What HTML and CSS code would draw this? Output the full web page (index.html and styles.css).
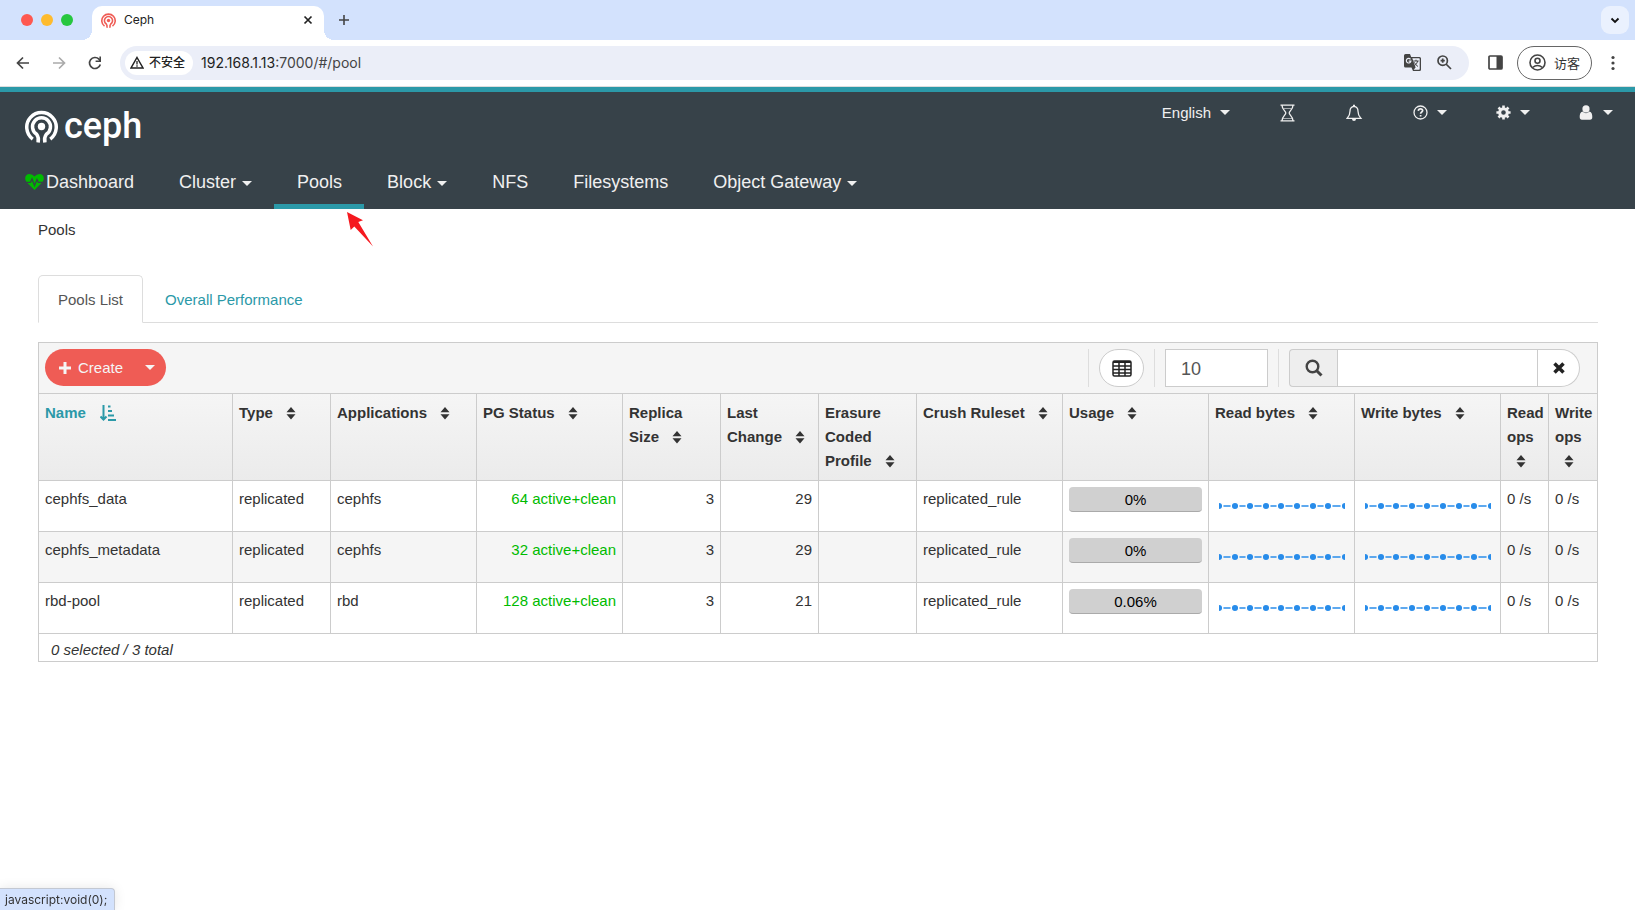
FILE: index.html
```html
<!DOCTYPE html>
<html lang="en">
<head>
    <meta charset="utf-8">
    <title>Ceph</title>
    <link rel="stylesheet" href="styles.css">
</head>
<body>
    <!-- shared icons -->
    <svg class="sprite" aria-hidden="true">
        <symbol id="ceph-mark" viewBox="0 0 32 32">
            <g fill="none" stroke="currentColor" stroke-width="3.400">
                <path d="M7.500 28.200A14.300 14.300 0 1 1 24.500 28.200"/>
                <path d="M12.700 31.500C13.400 28 13.200 26 11.300 23.500A8.700 8.700 0 1 1 20.700 23.500C18.800 26 18.600 28 19.300 31.500"/>
            </g>
            <circle cx="16" cy="16" r="3.600" fill="currentColor"/>
        </symbol>
        <symbol id="sort" viewBox="0 0 10 14">
            <path d="M5 1L9.500 6.300H.5zM5 13.500L.5 8.200h9z" fill="currentColor"/>
        </symbol>
        <symbol id="sparkline" viewBox="0 0 126 8">
            <path d="M0 4h126" stroke="#288cea" stroke-width="1.500"/>
            <g fill="#288cea" stroke="currentColor" stroke-width="1.500">
                <circle cx="0" cy="4" r="3.800"/><circle cx="16" cy="4" r="3.800"/><circle cx="31" cy="4" r="3.800"/>
                <circle cx="47" cy="4" r="3.800"/><circle cx="62" cy="4" r="3.800"/><circle cx="78" cy="4" r="3.800"/>
                <circle cx="94" cy="4" r="3.800"/><circle cx="109" cy="4" r="3.800"/><circle cx="126" cy="4" r="3.800"/>
            </g>
        </symbol>
    </svg>

    <div class="tab-strip">
        <div class="lights"><i class="red"></i><i class="yellow"></i><i class="green"></i></div>
        <div class="browser-tab">
            <svg class="favicon" width="15" height="15"><use href="#ceph-mark"/></svg>
            <span>Ceph</span>
            <button class="plain" aria-label="Close tab">
                <svg width="10" height="10" viewBox="0 0 10 10"><path d="M1.500 1.500l7 7m0-7l-7 7" stroke="#222" stroke-width="1.700"/></svg>
            </button>
        </div>
        <button class="plain new-tab" aria-label="New tab">
            <svg width="12" height="12" viewBox="0 0 12 12"><path d="M6 1v10M1 6h10" stroke="#444" stroke-width="1.600"/></svg>
        </button>
        <button class="tab-search" aria-label="Search tabs">
            <svg width="10" height="7" viewBox="0 0 10 7"><path d="M1.500 1.500L5 5l3.500-3.500" fill="none" stroke="#111" stroke-width="1.800"/></svg>
        </button>
    </div>

    <div class="toolbar">
        <button class="plain nav-btn" aria-label="Back">
            <svg width="14" height="14" viewBox="0 0 14 14"><path d="M13 7H2M7 1.500L1.500 7 7 12.500" fill="none" stroke="#444" stroke-width="1.700"/></svg>
        </button>
        <button class="plain nav-btn" aria-label="Forward">
            <svg width="14" height="14" viewBox="0 0 14 14"><path d="M1 7h11M7 1.500L12.500 7 7 12.500" fill="none" stroke="#aaa" stroke-width="1.700"/></svg>
        </button>
        <button class="plain nav-btn" aria-label="Reload">
            <svg width="14" height="14" viewBox="0 0 14 14"><path d="M12.300 8.500A5.500 5.500 0 1 1 11 3.200L12.500 5" fill="none" stroke="#444" stroke-width="1.700"/><path d="M13 .5v5.500H7.600V4.400h3.800V.5z" fill="#444"/></svg>
        </button>
        <div class="omnibox">
            <span class="chip">
                <svg width="14" height="13" viewBox="0 0 14 13"><path d="M7 1.500L13 12H1z" fill="none" stroke="#222" stroke-width="1.500"/><path d="M7 5v3.500M7 9.300v1.400" stroke="#222" stroke-width="1.300"/></svg>
                不安全
            </span>
            <span class="url">192.168.1.13<span>:7000/#/pool</span></span>
            <svg class="translate" width="17" height="17" viewBox="0 0 17 17">
                <path d="M1.500 0H6l1.200 3H15.500A1.500 1.500 0 0 1 17 4.500v11a1.500 1.500 0 0 1-1.500 1.500H9l-1.500-3.500h-6A1.500 1.500 0 0 1 0 12V1.500A1.500 1.500 0 0 1 1.500 0z" fill="#444"/>
                <path d="M8.300 4.300h6.800q.6 0 .6.600v10.200q0 .6-.6.600H9.600l2-2.200z" fill="#edf0f9"/>
                <path d="M6.500 5.300A2.300 2.300 0 1 0 6.900 7.200H4.700" fill="none" stroke="#edf0f9" stroke-width="1.200"/>
                <path d="M9.300 7h5.400M12 5.700V7M13.700 7q-.7 3.200-3.200 4.600M10.300 8.300q1.200 2.600 3.700 4.200" fill="none" stroke="#444"/>
            </svg>
            <svg width="15" height="15" viewBox="0 0 15 15"><circle cx="5.700" cy="5.700" r="4.700" fill="none" stroke="#444" stroke-width="1.700"/><path d="M9 9l5 5M5.700 3.600v4.200M3.600 5.700h4.200" stroke="#444" stroke-width="1.700"/></svg>
        </div>
        <svg class="side-panel" width="15" height="15" viewBox="0 0 15 15"><rect x="1" y="1" width="13" height="13" rx="1" fill="none" stroke="#444" stroke-width="1.700"/><path d="M8.500 1H14v13H8.500z" fill="#444"/></svg>
        <button class="profile">
            <svg width="17" height="17" viewBox="0 0 17 17" fill="none" stroke="#444" stroke-width="1.600"><circle cx="8.500" cy="8.500" r="7.500"/><circle cx="8.500" cy="6.700" r="2.500"/><path d="M3.500 13.500q5-4 10 0"/></svg>
            访客
        </button>
        <button class="plain more" aria-label="Menu">
            <svg width="4" height="16" viewBox="0 0 4 16" fill="#444"><circle cx="2" cy="2.500" r="1.600"/><circle cx="2" cy="8" r="1.600"/><circle cx="2" cy="13.500" r="1.600"/></svg>
        </button>
    </div>

    <header class="header">
        <div class="header-top">
            <a href="#" class="logo"><svg width="33" height="33"><use href="#ceph-mark"/></svg>ceph</a>
            <div class="utilities">
                <a href="#">English <i class="caret"></i></a>
                <a href="#" aria-label="Tasks">
                    <svg width="18" height="18" viewBox="0 0 18 18" fill="none" stroke="currentColor" stroke-width="1.300"><path d="M1.500 1.200h14M1.500 16.800h14M3 1.200C3 5.500 6.800 7 6.800 9S3 12.500 3 16.800M14 1.200C14 5.500 10.200 7 10.200 9S14 12.500 14 16.800"/><path d="M4.500 4.500h8M4 14.500h9" stroke-width=".6"/></svg>
                </a>
                <a href="#" aria-label="Notifications">
                    <svg width="18" height="18" viewBox="0 0 18 18"><path d="M8 2.300C5 2.700 4 4.600 4 7.200 4 11 2.800 12.600 1.200 14.300h13.600C13.200 12.600 12 11 12 7.200 12 4.600 11 2.700 8 2.300z" fill="none" stroke="currentColor" stroke-width="1.300"/><path d="M7 .8h2v1.500H7zM6 15h4a2 2 0 0 1-4 0z" fill="currentColor"/></svg>
                </a>
                <a href="#" aria-label="Help">
                    <svg width="15" height="15" viewBox="0 0 15 15" fill="none" stroke="currentColor"><circle cx="7.500" cy="7.500" r="6.500" stroke-width="1.300"/><path d="M5.300 5.800q.2-2 2.200-2t2.200 1.800c0 1.400-2.100 1.500-2.100 3.200M7.600 9.900v1.700" stroke-width="1.700"/></svg>
                    <i class="caret"></i>
                </a>
                <a href="#" aria-label="Settings">
                    <svg width="15" height="15" viewBox="0 0 15 15" fill="none" stroke="currentColor"><circle cx="7.500" cy="7.500" r="3.800" stroke-width="3"/><path d="M7.500 .4v3M7.500 11.600v3M.4 7.500h3M11.600 7.500h3M2.500 2.500l2 2M10.500 10.500l2 2M12.500 2.500l-2 2M4.500 10.500l-2 2" stroke-width="2.600"/></svg>
                    <i class="caret"></i>
                </a>
                <a href="#" aria-label="User">
                    <svg width="15" height="15" viewBox="0 0 15 15" fill="currentColor"><circle cx="7" cy="3.900" r="3.600"/><path d="M3.500 6.500Q7 10 10.500 6.500C12.800 7.200 13.300 9.500 13.300 12q0 2.700-2.300 2.700H3Q.7 14.700.7 12C.7 9.500 1.200 7.200 3.500 6.500z"/></svg>
                    <i class="caret"></i>
                </a>
            </div>
        </div>
        <nav class="main-nav">
            <a href="#" class="dashboard">
                <svg width="19" height="16" viewBox="0 0 19 16"><path d="M9.500 16L2 8.500C-1.500 4.500.5 0 4.500 0q3 0 5 2.500Q11.500 0 14.500 0c4 0 6 4.500 2.500 8.500z" fill="#0b0"/><path d="M0 8.300h5.500L7 5l2.500 6.500L12 5.500l1.300 2.800H19" fill="none" stroke="#374249" stroke-width="1.300"/></svg>Dashboard</a>
            <a href="#">Cluster <i class="caret"></i></a>
            <a href="#" class="active">Pools
                <svg class="pointer" width="26" height="35" viewBox="0 0 26 35"><path d="M0 0L16 8.300 11.300 10 26 34.500 7.300 14.500 3.700 18z" fill="#f5191f"/></svg>
            </a>
            <a href="#">Block <i class="caret"></i></a>
            <a href="#">NFS</a>
            <a href="#">Filesystems</a>
            <a href="#">Object Gateway <i class="caret"></i></a>
        </nav>
    </header>

    <main class="content">
        <div class="breadcrumb">Pools</div>

        <div class="tabs">
            <a href="#" class="active">Pools List</a>
            <a href="#">Overall Performance</a>
        </div>

        <div class="datatable">
            <div class="table-tools">
                <div class="create-group">
                    <button class="create"><svg width="12" height="12" viewBox="0 0 12 12"><path d="M6 0v12M0 6h12" stroke="currentColor" stroke-width="3"/></svg>Create</button>
                    <button class="create-menu" aria-label="More actions"><i class="caret"></i></button>
                </div>
                <div class="tool">
                    <button class="columns" aria-label="Columns">
                        <svg width="20" height="17" viewBox="0 0 20 17" fill="none" stroke="#222" stroke-width="1.500"><rect x="1" y="1" width="18" height="15" rx="1.500"/><path d="M1 2h18" stroke-width="2"/><path d="M1 6h18M1 9.500h18M1 13h18M7 2v14M13 2v14"/></svg>
                    </button>
                </div>
                <div class="tool">
                    <input class="limit" type="text" value="10" aria-label="Rows per page">
                </div>
                <div class="tool search">
                    <label for="search" aria-label="Search">
                        <svg width="18" height="18" viewBox="0 0 18 18" fill="none" stroke="#444"><circle cx="7.500" cy="7.500" r="5.800" stroke-width="2.400"/><path d="M11.500 11.500l5 5" stroke-width="3"/></svg>
                    </label>
                    <input id="search" type="text">
                    <button aria-label="Clear search">
                        <svg width="12" height="12" viewBox="0 0 12 12"><path d="M1.500 1.500l9 9m0-9l-9 9" stroke="#222" stroke-width="3.500"/></svg>
                    </button>
                </div>
            </div>

            <table>
                <colgroup>
                    <col>
                    <col class="small">
                    <col class="medium">
                    <col class="medium">
                    <col class="small">
                    <col class="small">
                    <col class="small">
                    <col class="medium">
                    <col class="medium">
                    <col class="medium">
                    <col class="medium">
                    <col class="tiny">
                    <col class="tiny">
                </colgroup>
                <thead>
                    <tr>
                        <th class="sorted">Name <svg width="16" height="16" viewBox="0 0 16 16" fill="none" stroke="currentColor" stroke-width="2"><path d="M3.500 0v14M.5 11.500l3 3 3-3M8 1.500h2.500M8 6h4M8 10.500h6M8 15h8"/></svg></th>
                        <th>Type <svg class="sort"><use href="#sort"/></svg></th>
                        <th>Applications <svg class="sort"><use href="#sort"/></svg></th>
                        <th>PG Status <svg class="sort"><use href="#sort"/></svg></th>
                        <th>Replica Size <svg class="sort"><use href="#sort"/></svg></th>
                        <th>Last Change <svg class="sort"><use href="#sort"/></svg></th>
                        <th>Erasure Coded Profile <svg class="sort"><use href="#sort"/></svg></th>
                        <th>Crush Ruleset <svg class="sort"><use href="#sort"/></svg></th>
                        <th>Usage <svg class="sort"><use href="#sort"/></svg></th>
                        <th>Read bytes <svg class="sort"><use href="#sort"/></svg></th>
                        <th>Write bytes <svg class="sort"><use href="#sort"/></svg></th>
                        <th>Read ops <svg class="sort"><use href="#sort"/></svg></th>
                        <th>Write ops <svg class="sort"><use href="#sort"/></svg></th>
                    </tr>
                </thead>
                <tbody>
                    <tr>
                        <td>cephfs_data</td>
                        <td>replicated</td>
                        <td>cephfs</td>
                        <td class="num clean">64 active+clean</td>
                        <td class="num">3</td>
                        <td class="num">29</td>
                        <td></td>
                        <td>replicated_rule</td>
                        <td><div class="usage">0%</div></td>
                        <td><svg class="spark"><use href="#sparkline"/></svg></td>
                        <td><svg class="spark"><use href="#sparkline"/></svg></td>
                        <td>0 /s</td>
                        <td>0 /s</td>
                    </tr>
                    <tr>
                        <td>cephfs_metadata</td>
                        <td>replicated</td>
                        <td>cephfs</td>
                        <td class="num clean">32 active+clean</td>
                        <td class="num">3</td>
                        <td class="num">29</td>
                        <td></td>
                        <td>replicated_rule</td>
                        <td><div class="usage">0%</div></td>
                        <td><svg class="spark"><use href="#sparkline"/></svg></td>
                        <td><svg class="spark"><use href="#sparkline"/></svg></td>
                        <td>0 /s</td>
                        <td>0 /s</td>
                    </tr>
                    <tr>
                        <td>rbd-pool</td>
                        <td>replicated</td>
                        <td>rbd</td>
                        <td class="num clean">128 active+clean</td>
                        <td class="num">3</td>
                        <td class="num">21</td>
                        <td></td>
                        <td>replicated_rule</td>
                        <td><div class="usage">0.06%</div></td>
                        <td><svg class="spark"><use href="#sparkline"/></svg></td>
                        <td><svg class="spark"><use href="#sparkline"/></svg></td>
                        <td>0 /s</td>
                        <td>0 /s</td>
                    </tr>
                </tbody>
            </table>
            <div class="table-footer">0 selected / 3 total</div>
        </div>
    </main>

    <div class="status-bar">javascript:void(0);</div>
</body>
</html>
```

FILE: styles.css
```css
* {
    box-sizing: border-box;
}
body {
    margin: 0;
    background-color: #fff;
    color: #333;
    font: 15px/22px "Liberation Sans", Arial, sans-serif;
}
a {
    color: inherit;
    text-decoration: none;
}
button {
    font: inherit;
    padding: 0;
    cursor: pointer;
}
svg {
    display: block;
    flex: none;
}
.sprite {
    position: absolute;
    width: 0;
    height: 0;
}
.plain {
    display: flex;
    align-items: center;
    justify-content: center;
    border: 0;
    background: none;
}
.caret {
    display: inline-block;
    border: 5px solid transparent;
    border-top-color: currentColor;
    border-bottom: 0;
    vertical-align: middle;
}

/* browser */
.tab-strip {
    display: flex;
    align-items: center;
    height: 40px;
    padding: 0 6px 0 21px;
    background-color: #d3e2fd;
    font: 12px/18px Inter, sans-serif;
    color: #222;
}
.lights {
    display: flex;
    gap: 8px;
    width: 71px;
}
.lights i {
    width: 12px;
    height: 12px;
    border-radius: 50%;
}
.red {
    background-color: #fe5850;
}
.yellow {
    background-color: #febb2e;
}
.green {
    background-color: #27c73f;
}
.browser-tab {
    position: relative;
    display: flex;
    align-items: center;
    align-self: flex-end;
    gap: 8px;
    width: 232px;
    height: 34px;
    padding: 0 11px 6px 9px;
    border-radius: 10px 10px 0 0;
    background-color: #fff;
}
.browser-tab::before,
.browser-tab::after {
    content: "";
    position: absolute;
    bottom: 0;
    width: 10px;
    height: 10px;
}
.browser-tab::before {
    right: 100%;
    background: radial-gradient(circle at 0 0, transparent 10px, #fff 10px);
}
.browser-tab::after {
    left: 100%;
    background: radial-gradient(circle at 100% 0, transparent 10px, #fff 10px);
}
.browser-tab .plain {
    margin-left: auto;
}
.favicon {
    color: #ef5c55;
}
.new-tab {
    margin-left: 14px;
}
.tab-search {
    display: flex;
    align-items: center;
    justify-content: center;
    width: 28px;
    height: 28px;
    margin-left: auto;
    border: 0;
    border-radius: 9px;
    background-color: #eaf1fe;
}
.toolbar {
    display: flex;
    align-items: center;
    height: 47px;
    padding: 0 20px 1px 16px;
    border-bottom: 1px solid #ddd;
    font: 14px/20px Inter, "Noto Sans CJK SC", sans-serif;
}
.nav-btn {
    width: 14px;
    margin-right: 22px;
}
.nav-btn + .nav-btn + .nav-btn {
    margin-right: 18px;
}
.omnibox {
    display: flex;
    flex: 1;
    align-items: center;
    height: 34px;
    padding: 0 17px 0 5px;
    border-radius: 17px;
    background-color: #ebeef8;
}
.chip {
    display: flex;
    align-items: center;
    gap: 5px;
    height: 24px;
    padding: 0 8px 0 5px;
    border-radius: 12px;
    background-color: #fff;
    color: #222;
    font-size: 12px;
    font-weight: 500;
}
.url {
    margin-left: 8px;
    color: #222;
}
.url span {
    color: #444;
}
.translate {
    margin: 0 16px 0 auto;
}
.side-panel {
    margin: 0 14px 0 19px;
}
.profile {
    display: flex;
    align-items: center;
    gap: 8px;
    height: 34px;
    padding: 0 11px;
    border: 1px solid #666;
    border-radius: 17px;
    background-color: #fff;
    color: #333;
    font-size: 13px;
}
.more {
    margin-left: 19px;
}

/* header */
.header {
    border-top: 5px solid #2b99a8;
    background-color: #374249;
    color: #f0f0f0;
}
.header-top {
    display: flex;
    justify-content: space-between;
    height: 63px;
    padding: 0 22px 0 25px;
}
.logo {
    display: flex;
    align-items: center;
    gap: 6px;
    padding-top: 5px;
    color: #fff;
    font: 500 36px/40px Roboto, sans-serif;
}
.utilities {
    display: flex;
    align-items: center;
    gap: 49px;
    height: 41px;
}
.utilities a {
    display: flex;
    align-items: center;
    gap: 9px;
}
.main-nav {
    display: flex;
    padding-left: 2px;
    font-size: 18px;
}
.main-nav a {
    position: relative;
    height: 54px;
    padding: 0 22px 0 23px;
    line-height: 54px;
    white-space: nowrap;
}
.main-nav .caret {
    margin-left: 1px;
}
.main-nav .dashboard {
    display: flex;
    align-items: center;
    gap: 2px;
}
.main-nav .active {
    box-shadow: inset 0 -5px #2b99a8;
}
.pointer {
    position: absolute;
    top: 57px;
    right: -9px;
    z-index: 1;
}

/* page */
.content {
    padding: 10px 37px 0 38px;
}
.tabs {
    display: flex;
    margin: 34px 0 19px;
    border-bottom: 1px solid #ddd;
}
.tabs a {
    padding: 14px 22px 10px;
    color: #2b99a8;
}
.tabs .active {
    margin-bottom: -1px;
    padding: 13px 19px 11px;
    border: 1px solid #ddd;
    border-bottom-color: #fff;
    border-radius: 5px 5px 0 0;
    color: #555;
}
.datatable {
    border: 1px solid #ccc;
}
.table-tools {
    display: flex;
    align-items: center;
    height: 51px;
    padding: 0 17px 0 6px;
    border-bottom: 1px solid #ccc;
    background-color: #f5f5f5;
}
.create-group {
    display: flex;
    height: 38px;
    margin-right: auto;
    padding-bottom: 1px;
}
.create-group button {
    display: flex;
    align-items: center;
    border: 0;
    background-color: #ef5c55;
    color: #f5f5f5;
}
.create-group .create {
    gap: 7px;
    padding: 0 11px 0 14px;
    border-radius: 19px 0 0 19px;
}
.create-group .create-menu {
    padding: 0 11px;
    border-radius: 0 19px 19px 0;
}
.tool {
    display: flex;
    height: 38px;
    padding: 0 10px;
    border-left: 1px solid #ddd;
}
.search {
    padding-right: 0;
}
.columns {
    display: flex;
    align-items: center;
    justify-content: center;
    width: 45px;
    border: 1px solid #ccc;
    border-radius: 19px;
    background-color: #fff;
}
.tool input {
    border: 1px solid #ccc;
    border-radius: 0;
    outline: 0;
    background-color: #fff;
    color: #555;
    font: 18px/24px "Liberation Sans", Arial, sans-serif;
}
.limit {
    width: 103px;
    padding: 2px 15px 0;
}
.search label {
    display: flex;
    align-items: center;
    justify-content: center;
    width: 48px;
    border: 1px solid #ccc;
    border-right: 0;
    border-radius: 4px 0 0 4px;
    background-color: #eee;
}
.search input {
    width: 201px;
}
.search button {
    display: flex;
    align-items: center;
    justify-content: center;
    width: 42px;
    border: 1px solid #ccc;
    border-left: 0;
    border-radius: 0 19px 19px 0;
    background-color: #fff;
}
table {
    width: 100%;
    border-spacing: 0;
    table-layout: fixed;
}
.small {
    width: 98px;
}
.medium {
    width: 146px;
}
.tiny {
    width: 48px;
}
th,
td {
    padding: 6px;
    border-right: 1px solid #ccc;
    border-bottom: 1px solid #ccc;
    line-height: 24px;
    text-align: left;
    vertical-align: top;
}
th:last-child,
td:last-child {
    border-right: 0;
}
thead tr {
    background: linear-gradient(#f5f5f5, #ebebeb);
}
th {
    height: 87px;
    padding-top: 7px;
}
th svg {
    display: inline-block;
    margin: -2px 0 0 10px;
    vertical-align: middle;
}
.sort {
    width: 10px;
    height: 14px;
    margin-left: 9px;
}
.sorted {
    color: #2b99a8;
}
td {
    height: 51px;
    color: #333;
}
tbody tr:nth-child(even) {
    background-color: #f5f5f5;
}
.num {
    text-align: right;
}
.clean {
    color: #0b0;
}
.usage {
    height: 25px;
    border-bottom: 1px solid #aaa;
    border-radius: 4px;
    background-color: #d0d0d0;
    color: #000;
    line-height: 26px;
    text-align: center;
}
.spark {
    width: 126px;
    height: 8px;
    margin: 15px 4px 0;
    color: #fff;
}
tr:nth-child(even) .spark {
    color: #f5f5f5;
}
.table-footer {
    height: 27px;
    padding: 5px 12px 0;
    font-style: italic;
}
.status-bar {
    position: fixed;
    bottom: 0;
    left: 0;
    padding: 1px 7px 1px 5px;
    border: 1px solid #c3c8d2;
    border-width: 1px 1px 0 0;
    border-radius: 0 4px 0 0;
    background-color: #d3e2fd;
    box-shadow: 0 0 12px rgba(0, 0, 0, .1);
    font: 12px/19px Inter, sans-serif;
}
```
